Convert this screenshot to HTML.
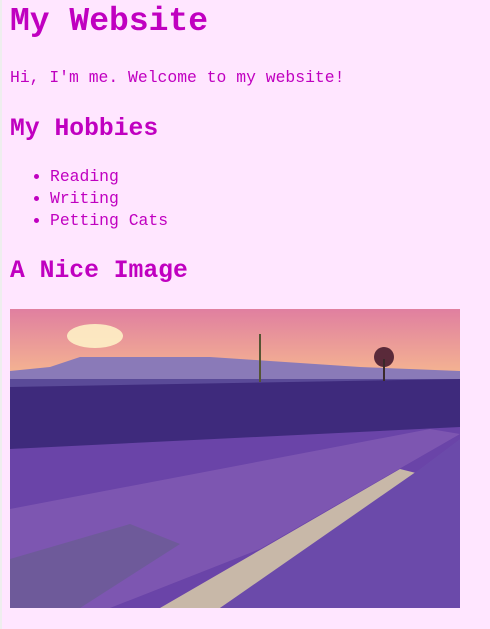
<!DOCTYPE html>
<html><head><style>
html,body{margin:0;padding:0}
body{width:490px;height:629px;background:#ffe6ff;color:#c000c0;font-family:"Liberation Mono",monospace;position:relative;overflow:hidden}
.l{position:absolute;left:0;top:0;width:2px;height:629px;background:#eee}
.t{position:absolute;left:10px;white-space:nowrap;margin:0}
h1.t{font-size:33px;font-weight:bold;top:2px;line-height:40px}
p.t{font-size:16.4px;top:68px;line-height:20px}
h2.t{font-size:24.7px;font-weight:bold;line-height:30px}
ul{position:absolute;left:10px;top:166px;margin:0;padding-left:40px;font-size:16.4px;line-height:22px}
.img{position:absolute;left:10px;top:309px;width:450px;height:299px;overflow:hidden;background:#5b3a9e}
</style></head><body>
<div class="l"></div>
<h1 class="t">My Website</h1>
<p class="t">Hi, I'm me. Welcome to my website!</p>
<h2 class="t" style="top:114px">My Hobbies</h2>
<ul><li>Reading</li><li>Writing</li><li>Petting Cats</li></ul>
<h2 class="t" style="top:256px">A Nice Image</h2>
<div class="img">
<svg width="450" height="299" viewBox="0 0 450 299">
<defs><linearGradient id="s" x1="0" y1="0" x2="0" y2="1"><stop offset="0" stop-color="#e07fa0"/><stop offset="1" stop-color="#f6b890"/></linearGradient></defs>
<rect width="450" height="70" fill="url(#s)"/>
<ellipse cx="85" cy="27" rx="28" ry="12" fill="#fff6c8" opacity=".85"/>
<path d="M0 62 L40 58 L70 48 L200 48 L260 52 L350 58 L450 62 L450 75 L0 75Z" fill="#8a7ab8"/>
<rect x="0" y="70" width="450" height="10" fill="#5a4a98"/>
<path d="M0 78 L450 70 L450 130 L0 140Z" fill="#3e2a7c"/>
<path d="M0 140 L450 118 L450 180 L250 299 L0 299Z" fill="#6a44a8"/>
<path d="M0 200 L420 120 L450 125 L250 240 L100 299 L0 299Z" fill="#8a62b8" opacity=".6"/>
<path d="M0 250 L120 215 L170 235 L70 299 L0 299Z" fill="#6e5a9a"/>
<path d="M150 299 L390 160 L410 165 L210 299Z" fill="#c8b8a8"/>
<path d="M210 299 L410 160 L450 130 L450 299Z" fill="#6b4aaa"/>
<rect x="249" y="25" width="2" height="48" fill="#553"/>
<circle cx="374" cy="48" r="10" fill="#5a2a3a"/>
<rect x="373" y="50" width="2" height="22" fill="#3a2a2a"/>
</svg>
</div>
</body></html>
